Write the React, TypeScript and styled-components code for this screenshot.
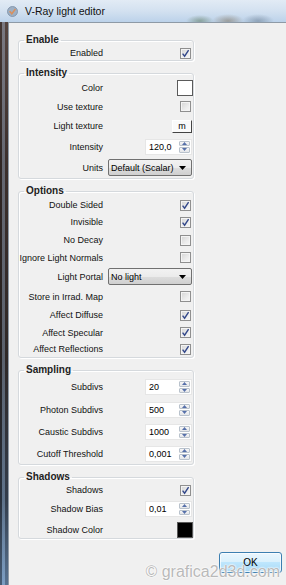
import styled, { createGlobalStyle } from "styled-components";

const GlobalStyle = createGlobalStyle`
  html, body {
    margin: 0;
    padding: 0;
    background: #f0f0f0;
  }
  body {
    font-family: "Liberation Sans", Arial, sans-serif;
  }
`;

type Control =
  | { kind: "check"; on: boolean }
  | { kind: "swatch"; color: string }
  | { kind: "tex"; text: string }
  | { kind: "spin"; value: string }
  | { kind: "select"; value: string };

type Field = { label: string; h: number; control: Control };
type Section = { title: string; fields: Field[] };

const sections: Section[] = [
  {
    title: "Enable",
    fields: [{ label: "Enabled", h: 14, control: { kind: "check", on: true } }],
  },
  {
    title: "Intensity",
    fields: [
      { label: "Color", h: 18, control: { kind: "swatch", color: "#ffffff" } },
      { label: "Use texture", h: 19, control: { kind: "check", on: false } },
      { label: "Light texture", h: 20, control: { kind: "tex", text: "m" } },
      { label: "Intensity", h: 21, control: { kind: "spin", value: "120,0" } },
      { label: "Units", h: 21, control: { kind: "select", value: "Default (Scalar)" } },
    ],
  },
  {
    title: "Options",
    fields: [
      { label: "Double Sided", h: 16, control: { kind: "check", on: true } },
      { label: "Invisible", h: 18, control: { kind: "check", on: true } },
      { label: "No Decay", h: 18, control: { kind: "check", on: false } },
      { label: "Ignore Light Normals", h: 17, control: { kind: "check", on: false } },
      { label: "Light Portal", h: 21, control: { kind: "select", value: "No light" } },
      { label: "Store in Irrad. Map", h: 19, control: { kind: "check", on: false } },
      { label: "Affect Diffuse", h: 18, control: { kind: "check", on: true } },
      { label: "Affect Specular", h: 17, control: { kind: "check", on: true } },
      { label: "Affect Reflections", h: 16, control: { kind: "check", on: true } },
    ],
  },
  {
    title: "Sampling",
    fields: [
      { label: "Subdivs", h: 22, control: { kind: "spin", value: "20" } },
      { label: "Photon Subdivs", h: 23, control: { kind: "spin", value: "500" } },
      { label: "Caustic Subdivs", h: 22, control: { kind: "spin", value: "1000" } },
      { label: "Cutoff Threshold", h: 21, control: { kind: "spin", value: "0,001" } },
    ],
  },
  {
    title: "Shadows",
    fields: [
      { label: "Shadows", h: 14, control: { kind: "check", on: true } },
      { label: "Shadow Bias", h: 24, control: { kind: "spin", value: "0,01" } },
      { label: "Shadow Color", h: 17, control: { kind: "swatch", color: "#000000" } },
    ],
  },
];

const renderControl = (c: Control) => {
  switch (c.kind) {
    case "check":
      return (
        <CheckBox>
          {c.on && (
            <svg width="9" height="9" viewBox="0 0 9 9">
              <path d="M1.6 4.6 L3.6 7.2 L7.6 1.2" fill="none" stroke="#33488a" strokeWidth="1.4" />
            </svg>
          )}
        </CheckBox>
      );
    case "swatch":
      return <Swatch color={c.color} />;
    case "tex":
      return <TexButton>{c.text}</TexButton>;
    case "spin":
      return (
        <Spinner>
          <SpinValue>{c.value}</SpinValue>
          <SpinButtons>
            <SpinButton>
              <svg width="5" height="3" viewBox="0 0 5 3">
                <path d="M0 3 L2.5 0 L5 3 Z" fill="#5670aa" />
              </svg>
            </SpinButton>
            <SpinButton>
              <svg width="5" height="3" viewBox="0 0 5 3">
                <path d="M0 0 L2.5 3 L5 0 Z" fill="#5670aa" />
              </svg>
            </SpinButton>
          </SpinButtons>
        </Spinner>
      );
    case "select":
      return (
        <Select>
          <span>{c.value}</span>
          <svg width="7" height="4" viewBox="0 0 7 4">
            <path d="M0 0 L7 0 L3.5 4 Z" fill="#000" />
          </svg>
        </Select>
      );
  }
};

const App = () => {
  return (
    <Window>
      <GlobalStyle />
      <TitleBar>
        <AppIcon>
          <svg width="11" height="11" viewBox="0 0 11 11">
            <circle cx="5.5" cy="5.5" r="5" fill="#9eb0c4" stroke="#7a8da3" strokeWidth="0.8" />
            <path d="M2.6 5.2 L4.8 7.8 L8.4 3" fill="none" stroke="#d9905e" strokeWidth="1.5" />
          </svg>
        </AppIcon>
        <Title>V-Ray light editor</Title>
      </TitleBar>
      <Body>
        <Frame />
        <Client>
          <Groups>
            {sections.map(section => (
              <Group key={section.title}>
                <GroupTitle>{section.title}</GroupTitle>
                {section.fields.map(field => (
                  <Row key={field.label} h={field.h}>
                    <Label>
                      <span>{field.label}</span>
                    </Label>
                    <ControlCell>{renderControl(field.control)}</ControlCell>
                  </Row>
                ))}
              </Group>
            ))}
          </Groups>
          <Footer>
            <OkButton>OK</OkButton>
          </Footer>
        </Client>
      </Body>
      <Watermark>© grafica2d3d.com</Watermark>
    </Window>
  );
};

const Window = styled.div`
  position: relative;
  width: 286px;
  height: 585px;
  overflow: hidden;
  display: flex;
  flex-direction: column;
`;

const TitleBar = styled.div`
  height: 22px;
  flex: none;
  display: flex;
  align-items: center;
  gap: 7px;
  padding-left: 7px;
  background:
    radial-gradient(ellipse 14px 6px at 200px 21px, rgba(70, 100, 60, 0.45), transparent),
    radial-gradient(ellipse 16px 7px at 228px 21px, rgba(110, 90, 60, 0.45), transparent),
    radial-gradient(ellipse 16px 7px at 258px 21px, rgba(70, 90, 110, 0.4), transparent),
    linear-gradient(to bottom, #e2ebf5 0%, #d3e1f0 50%, #bcd2ea 100%);
`;

const AppIcon = styled.div`
  width: 11px;
  height: 11px;
  display: flex;
`;

const Title = styled.div`
  font-size: 10.5px;
  color: #111;
  letter-spacing: 0;
`;

const Body = styled.div`
  flex: 1;
  display: flex;
  min-height: 0;
`;

const Frame = styled.div`
  width: 8px;
  flex: none;
  background:
    linear-gradient(to right, rgba(0, 0, 0, 0.35) 0 2px, rgba(150, 185, 220, 0.35) 2px 5px, rgba(0, 0, 0, 0.2) 5px 8px),
    linear-gradient(to bottom, #6a5650 0%, #4a3b37 25%, #3a3231 60%, #3f4c5e 85%, #6d8fb5 100%);
`;

const Client = styled.div`
  flex: 1;
  background: #f0f0f0;
  border-top: 1px solid #8e9aa6;
  border-left: 1px solid #8e9aa6;
  padding: 11px 0 0 9px;
  display: flex;
  flex-direction: column;
`;

const Groups = styled.div`
  width: 176px;
  display: flex;
  flex-direction: column;
  gap: 6px;
`;

const Group = styled.fieldset`
  margin: 0;
  padding: 0;
  min-width: 0;
  border: 1px solid #d5d9dd;
  border-radius: 3px;
  box-shadow: inset 1px 1px 0 #fff, 1px 1px 0 #fff;
`;

const GroupTitle = styled.legend`
  margin-left: 5px;
  padding: 0 2px;
  font-size: 10px;
  line-height: 12px;
  font-weight: 700;
  color: #222;
`;

const Row = styled.div<{ h: number }>`
  height: ${props => props.h}px;
  display: flex;
  align-items: center;
`;

const Label = styled.div`
  width: 84px;
  flex: none;
  display: flex;
  justify-content: flex-end;
  white-space: nowrap;
  font-size: 9px;
  color: #111;
`;

const ControlCell = styled.div`
  flex: 1;
  display: flex;
  justify-content: flex-end;
  padding-right: 1px;
`;

const CheckBox = styled.span`
  width: 11px;
  height: 11px;
  box-sizing: border-box;
  margin-right: 1px;
  border: 1px solid #8f8f8f;
  background: linear-gradient(135deg, #d4d4d4 0%, #ececec 60%, #f7f7f7 100%);
  box-shadow: inset 0 0 0 1px #f4f4f4;
  display: flex;
  align-items: center;
  justify-content: center;
`;

const Swatch = styled.div<{ color: string }>`
  width: 16px;
  height: 16px;
  box-sizing: border-box;
  margin-right: -1px;
  background: ${props => props.color};
  border: 1px solid #5a5a5a;
`;

const TexButton = styled.div`
  width: 20px;
  height: 13px;
  box-sizing: border-box;
  background: #fafafa;
  border-top: 1px solid #fff;
  border-left: 1px solid #fff;
  border-right: 1px solid #444;
  border-bottom: 1px solid #444;
  font-size: 9px;
  line-height: 11px;
  text-align: center;
  color: #000;
`;

const Spinner = styled.div`
  width: 47px;
  height: 16px;
  display: flex;
  background: #fff;
  border: 1px solid #e6e6e6;
  box-sizing: border-box;
`;

const SpinValue = styled.div`
  flex: 1;
  display: flex;
  align-items: center;
  padding-left: 3px;
  font-size: 9px;
  color: #000;
`;

const SpinButtons = styled.div`
  width: 11px;
  display: flex;
  flex-direction: column;
  gap: 1px;
  padding: 1px 1px 1px 0;
`;

const SpinButton = styled.div`
  flex: 1;
  border: 1px solid #b9c2cc;
  border-radius: 1px;
  background: linear-gradient(to bottom, #f7f7f7, #e4e6e9);
  display: flex;
  align-items: center;
  justify-content: center;
`;

const Select = styled.div`
  width: 84px;
  height: 17px;
  box-sizing: border-box;
  border: 1px solid #707070;
  border-radius: 2px;
  background: linear-gradient(to bottom, #f2f2f2 0%, #ebebeb 50%, #dddddd 51%, #cfcfcf 100%);
  display: flex;
  align-items: center;
  justify-content: space-between;
  padding: 0 5px 0 2px;
  font-size: 9px;
  color: #000;
`;

const Footer = styled.div`
  display: flex;
  justify-content: flex-end;
  padding-right: 4px;
  margin-top: 13px;
`;

const OkButton = styled.button`
  width: 63px;
  height: 21px;
  padding: 0;
  border: 1px solid #3c7fb1;
  border-radius: 3px;
  background: linear-gradient(to bottom, #eaf6fd 0%, #d9f0fc 49%, #bee6fd 50%, #a7d9f5 100%);
  box-shadow: inset 0 0 0 1px rgba(255, 255, 255, 0.7);
  font-family: "Liberation Sans", Arial, sans-serif;
  font-size: 10px;
  color: #000;
`;

const Watermark = styled.div`
  position: absolute;
  right: 6px;
  bottom: 4px;
  font-family: "Liberation Sans", Arial, sans-serif;
  font-size: 16px;
  color: #b9b9b9;
  text-shadow: 0 0 2px #fff, 0 0 2px #fff, 0 0 1px #fff;
  white-space: nowrap;
  pointer-events: none;
`;

export default App;
